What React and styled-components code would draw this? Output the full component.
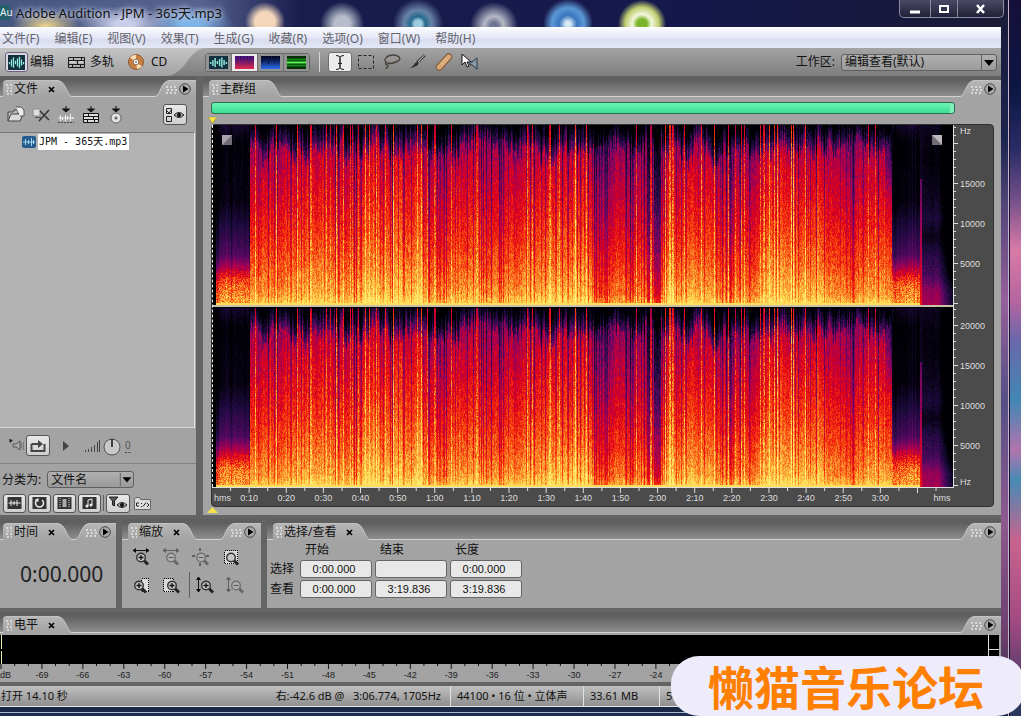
import { useEffect, useRef } from 'react'
import styled, { createGlobalStyle, css } from 'styled-components'

const GlobalStyle = createGlobalStyle`
  * { box-sizing: border-box; }
  body {
    margin: 0;
    font: 12px/16px "Noto Sans", "Noto Sans CJK SC", sans-serif;
    color: #111;
  }
  button, input, select { font: inherit; color: inherit; }
  button { cursor: pointer; }
`

/* ---------- window ---------- */

const Desktop = styled.div`
  position: relative;
  display: flex;
  min-height: 100vh;
  overflow: hidden;
  background: linear-gradient(#15103a 0, #0d1644 90px, #2a2d66 150px, #75508c 200px, #d97aa6 250px, #b765a0 300px,
    #6b67ab 340px, #4187b5 400px, #b274ad 450px, #478ab5 480px, #c8648e 540px, #a44a83 620px, #27355c 716px);
`

const Window = styled.div`
  flex: 1;
  min-width: 0;
  display: flex;
  flex-direction: column;
  margin-right: 11px;
  padding: 0 7px 9px 0;
  border-right: 1px solid #15122c;
  box-shadow: inset -1px 0 #c9b5d0;
  background:
    linear-gradient(0deg, #1c2c4c 3px, #a9b8cc 3px, #a9b8cc 4px, #182846 4px, #182846 9px, transparent 9px),
    linear-gradient(#1a1a38 0, #1b2450 140px, #4e4377 200px, #96609b 300px, #554f86 400px, #8e5a90 520px, #6b3d6c 640px, #26304f 700px);
`

const TitleBar = styled.header`
  display: flex;
  align-items: flex-start;
  height: 27px;
  background:
    radial-gradient(ellipse 34px 16px at 46px 26px, #f1d68a, transparent),
    radial-gradient(ellipse 46px 18px at 124px 24px, #c9cdea 20%, transparent),
    radial-gradient(ellipse 44px 18px at 190px 24px, #7cb4e8 20%, transparent),
    radial-gradient(circle 20px at 265px 22px, #f3d6bb 50%, transparent),
    radial-gradient(circle 22px at 342px 24px, #b9bccb 35%, #6d7792 65%, transparent),
    radial-gradient(circle 25px at 418px 24px, #9fcadf 15%, #246a8c 30%, #6983a7 55%, transparent),
    radial-gradient(circle 24px at 494px 26px, #6d7694 15%, #b6b8c6 40%, transparent),
    radial-gradient(circle 25px at 568px 24px, #d6e7f7 10%, #3a76bd 35%, #5b97d6 65%, transparent),
    radial-gradient(circle 24px at 642px 24px, #7cb52c 20%, #f2f7de 40%, #c0cd71 70%, transparent),
    linear-gradient(90deg, #44557f 0, #56628f 200px, #191d4e 300px, #15184a 700px, #1a1a36 100%);
`

const AppBadge = styled.span`
  width: 10px;
  height: 15px;
  margin-top: 5px;
  background: #24606b;
  color: #e2f2f2;
  font-size: 10px;
  line-height: 14px;
`

const WindowTitle = styled.h1`
  flex: 1;
  margin: 5px 0 0 6px;
  font-size: 13px;
  line-height: 16px;
  font-weight: 400;
  white-space: nowrap;
  text-shadow: 0 0 5px #dfe6f8, 0 0 8px #cdd6ee;
`

const WindowControls = styled.div`
  display: flex;
  height: 18px;
  margin-right: -2px;
  border: 1px solid #8a8ca4;
  border-top: 0;
  border-radius: 0 0 5px 5px;
  background: linear-gradient(#4a4a64, #202038);
`

const WindowButton = styled.button`
  display: grid;
  place-items: center;
  width: ${(p) => p.$width}px;
  padding: 0;
  border: 0;
  border-left: ${(p) => (p.$first ? '0' : '1px solid #8a8ca4')};
  background: none;
`

const MenuBar = styled.nav`
  display: flex;
  gap: 15px;
  height: 21px;
  padding: 1px 2px 0;
  margin-right: 1px;
  border-top: 1px solid #fff;
  background: linear-gradient(#fafbff, #e6e9f6 45%, #d9ddf0 60%, #e4e7f5);
`

const MenuItem = styled.button`
  padding: 0;
  border: 0;
  background: none;
  color: #63636b;
  line-height: 17px;
  white-space: nowrap;
`

/* ---------- toolbar ---------- */

const ToolBar = styled.div`
  display: flex;
  align-items: center;
  height: 28px;
  margin-right: 1px;
  background: linear-gradient(#a4a4a4, #7d7d7d);
`

const ModeGroup = styled.div`
  display: flex;
  align-items: center;
  gap: 14px;
  height: 28px;
  padding-left: 5px;
  background: linear-gradient(#c4c4c4, #a2a2a2);
`

const ModeButton = styled.button`
  display: flex;
  align-items: center;
  gap: ${(p) => p.$gap || 2}px;
  height: 24px;
  padding: 0;
  border: 0;
  background: none;
  white-space: nowrap;
`

const ActiveIcon = styled.span`
  display: grid;
  place-items: center;
  width: 23px;
  height: 20px;
  border: 1px solid #6f5f7c;
  border-radius: 3px;
  background: #d8d8e2;
`

const ViewGroup = styled.div`
  display: flex;
  height: 19px;
  margin: 0 9px 0 0;
  border: 1px solid #666;
  border-radius: 3px;
`

const ViewButton = styled.button`
  display: grid;
  place-items: center;
  width: 26px;
  padding: 0;
  border: 0;
  border-right: 1px solid #707070;
  background: ${(p) => (p.$on ? '#efe9ef' : '#939393')};
  &:last-child { width: 25px; border-right: 0; }
`

const ToolDivider = styled.span`
  width: 1px;
  height: 20px;
  margin-right: 8px;
  background: #d6d6d6;
`

const Tool = styled.button`
  display: grid;
  place-items: center;
  width: 24px;
  height: 20px;
  margin-right: 2px;
  padding: 0;
  border: 1px solid transparent;
  border-radius: 3px;
  background: none;
  ${(p) => p.$on && css`
    background: #ececec;
    border-color: #6e6e6e;
  `}
`

const FieldLabel = styled.label`
  white-space: nowrap;
`

const SelectBox = styled.span`
  position: relative;
  display: block;
  flex: none;
  width: ${(p) => p.$width}px;
  margin: 0 ${(p) => p.$after || 0}px 0 ${(p) => p.$before || 0}px;
  select {
    display: block;
    width: 100%;
    height: 17px;
    padding: 0 20px 0 3px;
    border: 1px solid #5f5f5f;
    border-radius: 3px;
    background: linear-gradient(#b0b0b0, #9a9a9a);
    appearance: none;
    line-height: 14px;
  }
  svg {
    position: absolute;
    right: 0;
    top: 0;
    pointer-events: none;
  }
`

const WorkspaceField = styled.div`
  display: flex;
  align-items: center;
  margin-left: auto;
`

/* ---------- docked panels ---------- */

const Workspace = styled.main`
  flex: 1;
  display: flex;
  flex-direction: column;
  gap: 4px;
  margin-right: 1px;
  background: #646464;
`

const DockRow = styled.div`
  display: flex;
  gap: ${(p) => p.$gap}px;
  flex: ${(p) => (p.$grow ? 1 : 'none')};
`

const PanelBox = styled.section`
  display: flex;
  flex-direction: column;
  flex: ${(p) => (p.$width ? 'none' : 1)};
  width: ${(p) => (p.$width ? p.$width + 'px' : 'auto')};
  min-width: 0;
`

const Strip = styled.div`
  display: flex;
  align-items: flex-end;
  height: 21px;
  padding-left: ${(p) => p.$inset}px;
  border-bottom: 1px solid #d2d2d2;
  background: linear-gradient(#5f5f5f 20%, #8e8e8e);
`

const Tab = styled.div`
  display: flex;
  align-items: center;
  height: 17px;
  margin-bottom: -1px;
  padding: 0 ${(p) => (p.$closable ? 0 : 10)}px 0 2px;
  border-top: 1px solid #c2c2c2;
  border-radius: 4px 0 0 0;
  background: linear-gradient(#b6b6b6, #a3a3a3);
  h2 {
    margin: 0 0 0 2px;
    font-size: 12px;
    line-height: 16px;
    font-weight: 400;
    white-space: nowrap;
  }
`

const CloseTab = styled.button`
  display: grid;
  place-items: center;
  width: 10px;
  height: 12px;
  margin-left: 8px;
  padding: 0;
  border: 0;
  background: none;
`

const SlopeSvg = styled.svg`
  display: block;
  flex: none;
  margin-bottom: -1px;
`

const Fold = styled.div`
  display: flex;
  align-items: center;
  gap: 2px;
  height: 17px;
  margin-bottom: -1px;
  padding-right: 5px;
  border-top: 1px solid #c2c2c2;
  background: linear-gradient(#b6b6b6, #a3a3a3);
  > svg { margin-left: -6px; }
`

const FoldStart = styled.div`
  display: flex;
  margin-left: auto;
`

const RoundButton = styled.button`
  display: grid;
  padding: 0;
  border: 0;
  background: none;
`

const Body = styled.div`
  flex: 1;
  display: flex;
  flex-direction: column;
  background: #a3a3a3;
`

/* ---------- file panel ---------- */

const FileTools = styled.div`
  display: flex;
  align-items: center;
  gap: 5px;
  height: 35px;
  padding: 0 9px 0 6px;
`

const IconButton = styled.button`
  display: grid;
  place-items: center;
  width: 20px;
  height: 20px;
  padding: 0;
  border: 0;
  background: none;
`

const FrameButton = styled.button`
  display: grid;
  place-items: center;
  flex: none;
  width: ${(p) => p.$width || 24}px;
  height: ${(p) => p.$height || 19}px;
  margin-left: ${(p) => (p.$end ? 'auto' : 0)};
  padding: 0;
  border: 1px solid #555;
  border-radius: 3px;
  background: linear-gradient(#e8e8e8, #cfcfcf);
`

const FileList = styled.ul`
  flex: 1;
  margin: 0 1px 0 0;
  padding: 1px 0 0 22px;
  border-top: 1px solid #777;
  border-right: 1px solid #e4e4e4;
  border-bottom: 1px solid #d8d8d8;
  background: #b2b2b2;
  list-style: none;
`

const FileItem = styled.li`
  display: flex;
  align-items: center;
  gap: 2px;
  height: 16px;
  span {
    padding: 0 2px 0 1px;
    background: #fff;
    font: 10px/16px "DejaVu Sans Mono", "Noto Sans CJK SC", monospace;
    white-space: pre;
  }
`

const PlayRow = styled.div`
  display: flex;
  align-items: center;
  height: 36px;
  padding-left: 6px;
  border-bottom: 1px solid #808080;
`

const Gain = styled.span`
  margin-left: 3px;
  border-bottom: 1px dotted #444;
  color: #555;
  font-size: 10px;
  line-height: 13px;
`

const SortRow = styled.div`
  display: flex;
  align-items: center;
  height: 29px;
  padding: 2px 0 0 2px;
`

const FilterRow = styled.div`
  display: flex;
  align-items: center;
  gap: 2px;
  height: 22px;
  padding: 0 0 2px 3px;
`

/* ---------- main panel ---------- */

const Timeline = styled.div`
  display: flex;
  flex-direction: column;
  padding: 5px 7px 8px 8px;
`

const Overview = styled.div`
  height: 12px;
  margin-right: 39px;
  border: 1px solid #2d6e50;
  border-radius: 3px;
  background: linear-gradient(#6cf5b4, #3ddc92);
  box-shadow: inset -4px 0 #7ff0b9;
`

const Marker = styled.svg`
  display: block;
  margin: ${(p) => (p.$down ? '3px 0 0 -3px' : '0 0 -6px -4px')};
`

const Editor = styled.div`
  display: grid;
  grid-template-columns: 1fr 39px;
  border: 1px solid #303030;
  border-radius: 4px;
  background: #4b4b4b;
`

const Channels = styled.div`
  position: relative;
  display: flex;
  flex-direction: column;
  gap: 3px;
  min-width: 0;
  border-bottom: 1px solid #ddd;
  border-right: 1px solid #ddd;
  background: linear-gradient(#000 180px, #c8c2a8 180px, #c8c2a8 182px, #000 182px);
  canvas {
    display: block;
    width: 100%;
    image-rendering: pixelated;
  }
`

const Playhead = styled.span`
  position: absolute;
  top: 0;
  bottom: 0;
  left: 0;
  border-left: 1px dashed #eee;
`

const Corner = styled.svg`
  position: absolute;
  top: 10px;
  ${(p) => (p.$right ? 'right: 11px;' : 'left: 10px;')}
`

const Ruler = styled.svg`
  display: block;
  width: 100%;
  overflow: hidden;
  font: 9px "Liberation Sans", sans-serif;
  fill: ${(p) => p.$fill};
`

/* ---------- lower panels ---------- */

const Clock = styled.output`
  margin: 21px auto 20px 20px;
  font-size: 21px;
  line-height: 27px;
  color: #222;
`

const ZoomRows = styled.div`
  padding: 3px 0 9px 4px;
`

const ZoomRow = styled.div`
  display: flex;
  align-items: center;
  height: 28px;
`

const ZoomButton = styled(IconButton)`
  width: 30px;
  opacity: ${(p) => (p.$off ? 0.45 : 1)};
`

const Separator = styled.span`
  width: 1px;
  height: ${(p) => p.$height}px;
  margin-left: ${(p) => p.$before || 0}px;
  background: #5f5f5f;
`

const RangeTable = styled.table`
  width: 258px;
  table-layout: fixed;
  border-collapse: separate;
  border-spacing: 3px 2px;
  th, td { padding: 0; font-weight: 400; text-align: left; }
  thead th { height: 16px; line-height: 16px; padding-left: 5px; }
  th:first-child { width: 27px; padding: 0; }
  tbody th { line-height: 18px; white-space: nowrap; }
`

const TimeInput = styled.input`
  display: block;
  width: 100%;
  height: 18px;
  padding: 0 4px 0 0;
  border: 1px solid #666;
  border-radius: 3px;
  background: #e8e8e8;
  text-align: center;
  font: 11px "Liberation Sans", sans-serif;
`

const Meter = styled.div`
  display: flex;
  justify-content: space-between;
  height: 29px;
  margin: 2px 2px 0 0;
  border-left: 1px solid #000;
  background: #000;
`

const MeterLevel = styled.span`
  width: 1px;
  background: linear-gradient(#f1efae 14px, #000 14px, #000 16px, #f1efae 16px);
`

const MeterClip = styled.span`
  width: 11px;
  border-left: 1px solid #ddd;
  background: linear-gradient(#000 14px, #ddd 14px, #ddd 15px, #000 15px);
`

const StatusBar = styled.footer`
  display: grid;
  grid-template-columns: 450px 133px 76px 1fr;
  height: 21px;
  margin-right: 1px;
  border-bottom: 1px solid #e8e8e8;
  background: linear-gradient(#c0c0c0, #8f8f8f);
  font-size: 11px;
  line-height: 20px;
`

const StatusCell = styled.div`
  display: flex;
  justify-content: space-between;
  padding: 0 9px 0 ${(p) => (p.$first ? 1 : 6)}px;
  border-left: ${(p) => (p.$first ? '0' : '1px solid #e0e0e0')};
  white-space: pre;
`

const StatusDivide = styled.div`
  height: 4px;
  margin-right: 1px;
  background: #646464;
`

const ForumBanner = styled.div`
  position: absolute;
  right: -4px;
  bottom: 0;
  width: 354px;
  height: 60px;
  padding-left: 37px;
  border-radius: 28px;
  background: #eeebfb;
  color: #ff8000;
  font: 700 46px/58px "Noto Sans CJK SC", sans-serif;
  white-space: nowrap;
`

/* ---------- small drawings ---------- */

const Arrow = ({ w = 17 }) => (
  <svg width={w} height="17" viewBox="0 0 17 17">
    <path d="M1.5 1v15" stroke="#5f5f5f" />
    <path d="M4 6h10l-5 6z" fill="#000" />
  </svg>
)

const WaveIcon = ({ w = 17, h = 13 }) => (
  <svg width={w} height={h} viewBox="0 0 17 13" preserveAspectRatio="none">
    <rect width="17" height="13" fill="#12303f" />
    <path d="M1.500 6v2M3.500 4v6M5.500 2v9M7.500 5v3M9.500 3v7M11.500 1.500v10M13.500 4v5M15.500 6v2" stroke="#8fe8dc" strokeWidth="1.300" />
  </svg>
)

const TrackIcon = () => (
  <svg width="17" height="13" viewBox="0 0 17 13">
    <path d="M.5 1.500h16v10H.5zM.5 4.500h16M.5 8.500h16M5.500 1v3M9.500 4v4M4.500 8v3M12.500 8v3M13.500 1v3" fill="none" stroke="#1b1b1b" />
    <path d="M2 6h5M11 6h4" stroke="#eee" />
  </svg>
)

const DiscIcon = () => (
  <svg width="16" height="16" viewBox="0 0 16 16">
    <circle cx="8" cy="8" r="7.500" fill="#c77f42" stroke="#8a5a34" />
    <path d="M8 8 2 3.500A7.500 7.500 0 0 1 8 .8zM8 8l6 4.500A7.500 7.500 0 0 1 9 15z" fill="#f8ddb4" />
    <circle cx="8" cy="8" r="2.800" fill="#fff" stroke="#8f6b52" />
    <circle cx="8" cy="8" r="1" fill="#777" />
  </svg>
)

const SpectralIcon = ({ from, to, lines }) => (
  <svg width="19" height="13" viewBox="0 0 19 13">
    <defs>
      <linearGradient id={'spec' + from.slice(1)} x2="0" y2="1">
        <stop offset=".1" stopColor={from} />
        <stop offset="1" stopColor={to} />
      </linearGradient>
    </defs>
    <rect width="19" height="13" fill={`url(#spec${from.slice(1)})`} />
    <path d="M1.500 0v7M4.500 0v5M7.500 0v8M10.500 0v4M13.500 0v7M16.500 0v5" stroke={lines} />
  </svg>
)

const PhaseIcon = () => (
  <svg width="19" height="13" viewBox="0 0 19 13">
    <rect width="19" height="13" fill="#062c08" />
    <path d="M0 3.500h19M0 9.500h19" stroke="#0f8a17" strokeWidth="2" />
    <path d="M0 6.500h19" stroke="#5dfb55" strokeWidth="2" />
  </svg>
)

const tools = [
  ['时间选择', <svg width="12" height="15" viewBox="0 0 12 15"><path d="M2 .5q4 0 4 2v10q0 2-4 2M10 .5q-4 0-4 2v10q0 2 4 2M4 8.500h4" fill="none" stroke="#222" /></svg>],
  ['选框', <svg width="16" height="15" viewBox="0 0 16 15"><path d="M.5 .5h15v13H.5z" fill="none" stroke="#1d2733" strokeDasharray="3 2" /></svg>],
  ['套索', <svg width="18" height="16" viewBox="0 0 18 16"><path d="M4 9C-1 6 4 1 10 1s9 4 5 6-8 3-10 2-4 1-1 2-1 3-1 4" fill="none" stroke="#4d443c" strokeWidth="1.400" /></svg>],
  ['画笔', <svg width="18" height="16" viewBox="0 0 18 16"><path d="M16 1 8 8.500" stroke="#333" strokeWidth="2.500" /><path d="M16 .5 9 8" stroke="#ddd" /><path d="M9 8q1 3-2 4-3 2-6 2 4-2 5-5z" fill="#2b2b34" /></svg>],
  ['修复', <svg width="18" height="18" viewBox="0 0 18 18"><rect x="-1" y="6" width="20" height="6" rx="3" fill="#d9a877" stroke="#7d5634" transform="rotate(-48 9 9)" /><path d="m6 9 3 3M8 7l3 3M10 5l3 3" stroke="#f4dcbd" strokeDasharray="1 1" /></svg>],
  ['刷放', <svg width="18" height="16" viewBox="0 0 18 16"><path d="M1 0v11l3-3 2 5 2-1-2-4h4z" fill="#fff" stroke="#111" /><path d="M9 8h2l5-4v11l-5-4H9z" fill="#8c98a2" stroke="#263b4c" /></svg>],
]

const Slope = ({ flip }) => (
  <SlopeSvg width="16" height="17" viewBox="0 0 16 17">
    <defs>
      <linearGradient id="slopeFill" x2="0" y2="1">
        <stop stopColor="#b6b6b6" />
        <stop offset="1" stopColor="#a3a3a3" />
      </linearGradient>
    </defs>
    <g transform={flip ? 'matrix(-1 0 0 1 16 0)' : undefined}>
      <path d="M0 0c6 0 8 4 10 8s3 8 6 9H0z" fill="url(#slopeFill)" />
      <path d="M0 .5c6 0 8 4 10 8s3 8 6 8" fill="none" stroke="#c8c8c8" />
    </g>
  </SlopeSvg>
)

const Grip = ({ w = 7, h = 12 }) => {
  const dots = []
  for (let y = 1; y < h; y += 3) {
    for (let x = 1; x < w; x += 4) {
      dots.push(<rect key={x + '-' + y} x={x + (y % 2 ? 0 : 1)} y={y} width="2" height="2" fill="#d8d8d8" />)
    }
  }
  return <svg width={w} height={h} viewBox={`0 0 ${w} ${h}`}>{dots}</svg>
}

const PanelMenu = () => (
  <RoundButton aria-label="面板菜单">
    <svg width="12" height="12" viewBox="0 0 12 12">
      <circle cx="6" cy="6" r="5.300" fill="#a9a9a9" stroke="#4a4a4a" />
      <path d="m4 2.500 5.500 3.500L4 9.500z" fill="#000" />
    </svg>
  </RoundButton>
)

const Magnifier = ({ sign = '', frame, arrow, shift = 0 }) => (
  <svg width="18" height="18" viewBox="0 0 18 18">
    {frame && <path d={frame} fill="#dcdcdc" stroke="#000" strokeDasharray="1 1" shapeRendering="crispEdges" />}
    {arrow === 'h' && <path d="M1 2.500h16M4 .5 1 2.500l3 2M14 .5l3 2-3 2" fill="#111" stroke="#111" />}
    {arrow === 'v' && <path d="M2.500 1v15M.5 4l2-3 2 3M.5 13l2 3 2-3" fill="#111" stroke="#111" />}
    {arrow === 'all' && <path d="M8 0v3M8 15v3M0 8h3M14 8h3" fill="none" stroke="#111" strokeWidth="2" />}
    <g transform={`translate(${shift} 0)`}>
      <path d="m12 12.500 4 4" stroke="#222" strokeWidth="3" />
      <circle cx="9" cy="9.500" r="4.300" fill="#c6c6c6" stroke="#333" strokeWidth="1.400" />
      {sign !== '' && <path d={sign === '+' ? 'M6.500 9.500h5M9 7v5' : 'M6.500 9.500h5'} stroke="#111" strokeWidth="1.300" />}
    </g>
  </svg>
)

const DownArrow = () => <path d="M9 0v3M5.500 3h7L9 6z" fill="#111" stroke="#111" />

/* ---------- spectrogram ---------- */

// [level, r, g, b]
const palette = [
  [0, 0, 0, 4], [0.16, 28, 10, 62], [0.32, 92, 8, 100], [0.45, 165, 0, 82],
  [0.58, 222, 0, 28], [0.7, 246, 56, 12], [0.82, 250, 140, 42], [0.94, 254, 214, 78], [1.1, 255, 244, 130],
]

function colorAt(v) {
  let i = 1
  while (i < palette.length - 1 && v > palette[i][0]) i++
  const a = palette[i - 1]
  const b = palette[i]
  const t = Math.min(1, Math.max(0, (v - a[0]) / (b[0] - a[0])))
  return [a[1] + (b[1] - a[1]) * t, a[2] + (b[2] - a[2]) * t, a[3] + (b[3] - a[3]) * t]
}

function curve(points, f) {
  for (let i = 1; i < points.length; i++) {
    if (f <= points[i][0]) {
      const [x0, y0] = points[i - 1]
      const [x1, y1] = points[i]
      return y0 + ((y1 - y0) * (f - x0)) / (x1 - x0)
    }
  }
  return points[points.length - 1][1]
}

const loud = [[0, 0.96], [0.06, 0.86], [0.2, 0.77], [0.4, 0.67], [0.6, 0.59], [0.8, 0.51], [0.9, 0.46], [1, 0.4]]
const quiet = [[0, 0.86], [0.1, 0.77], [0.14, 0.68], [0.2, 0.48], [0.28, 0.28], [0.42, 0.17], [0.58, 0.03], [0.9, 0], [1, 0.1]]
const tail = [[0, 0.46], [0.08, 0.42], [0.16, 0.28], [0.3, 0.17], [0.38, 0.06], [0.48, 0.15], [0.6, 0.08], [0.8, 0.02], [1, 0.08]]
// loudness offset over the song
const energy = [[38, 0], [70, -0.04], [95, 0.01], [110, 0.01], [142, -0.05], [150, 0.05], [210, 0.05], [218, -0.05],
  [260, 0], [320, 0], [345, 0.05], [380, 0.05], [383, -0.1], [436, -0.08], [448, -0.12], [451, 0], [485, 0.01],
  [515, -0.06], [545, -0.05], [560, 0.05], [612, 0.05], [616, -0.04], [640, -0.04], [655, 0.01], [680, -0.02]]

function drawSpectrum(canvas, seed) {
  const { width, height } = canvas
  const ctx = canvas.getContext('2d')
  const img = ctx.createImageData(width, height)
  let s = 77
  const rnd = () => {
    s = (s * 1664525 + 1013904223) % 4294967296
    return s / 4294967296
  }
  const columns = []
  let slow = 0
  let cut = 0.5
  for (let x = 0; x < width; x++) {
    slow = slow * 0.75 + (rnd() - 0.5) * 0.075
    cut = cut * 0.8 + rnd() * 0.2
    const r = rnd()
    const weak = x > 382 && x < 450
    let hit = 0
    if (r < (weak ? 0.42 : 0.2)) hit = -0.08 - rnd() * 0.2
    else if (r > 0.89) hit = 0.08 + rnd() * 0.13
    if ((x > 434 && x < 438) || (x > 441 && x < 449)) hit = -0.3
    // how far the dark fringe reaches down from the top
    const edge = 0.98 - Math.max(0, cut - 0.35) * 0.45 - rnd() * 0.07
    columns.push({ shift: slow + hit, edge })
  }
  s = seed
  let grain = 0
  for (let x = 0; x < width; x++) {
    const c = columns[x]
    for (let y = 0; y < height; y++) {
      const f = 1 - y / (height - 1)
      const n = rnd() - 0.5
      grain = grain * 0.35 + n
      let v = 0
      if (x > 37 && x < 680) {
        v = curve(loud, f) + curve(energy, x) + c.shift * (0.55 + f * 0.5) + grain * 0.14
        if (f > c.edge && c.shift < 0.1) v -= 0.12 + (f - c.edge) * 2.2
        if (x > 670) v -= Math.max(0, f - 0.5) * (x - 670) * 0.08
        if (c.shift > 0.1 && n > 0 && f < 0.9) v += 0.06
      } else if (x >= 708 && x <= 709) {
        v = f < 0.7 ? 0.62 - f * 0.42 + n * 0.1 : 0.08
      } else if (x > 709) {
        v = curve(tail, f) + n * 0.09 + c.shift * 0.1 - Math.max(0, x - 726) * 0.025
      } else if (x > 3) {
        v = curve(quiet, f) + c.shift * 0.3 + n * (f < 0.2 ? 0.22 : 0.07)
        if (x < 8) v -= 0.08
      }
      if (y >= height - 2 && x > 3 && x < 708) v = 0.98
      const [r, g, b] = colorAt(v)
      const at = (y * width + x) * 4
      img.data[at] = r
      img.data[at + 1] = g
      img.data[at + 2] = b
      img.data[at + 3] = 255
    }
  }
  ctx.putImageData(img, 0, 0)
}

function Spectrum({ seed, height }) {
  const ref = useRef(null)
  useEffect(() => {
    drawSpectrum(ref.current, seed)
  }, [seed])
  return <canvas ref={ref} width="741" height={height} />
}

function FrequencyScale() {
  const ticks = []
  // 8px per 1000 Hz, both channels end on zero
  for (const zero of [178, 360]) {
    for (let k = 0; k <= 22; k++) {
      const y = zero - k * 8
      ticks.push(<path key={zero + '-' + k} d={`M0 ${y}.5h${k % 5 === 0 ? 4 : 2}`} stroke="#ddd" />)
    }
  }
  const labels = [['Hz', 9], ['15000', 62], ['10000', 102], ['5000', 142], ['20000', 204], ['15000', 244], ['10000', 284], ['5000', 324], ['Hz', 360]]
  return (
    <Ruler height="363" $fill="#dedede">
      {ticks}
      {labels.map(([text, y]) => <text key={y} x="6" y={y}>{text}</text>)}
    </Ruler>
  )
}

function TimeScale() {
  const at = (sec) => `${(sec / 199.836) * 100}%`
  const marks = []
  for (let t = 5; t < 200; t += 5) marks.push(t)
  return (
    <Ruler height="18" $fill="#dedede">
      {marks.map((t) => <line key={t} x1={at(t)} x2={at(t)} y1="0" y2={t % 10 ? 3 : 5} stroke="#ddd" />)}
      <text x="2" y="13">hms</text>
      {marks.filter((t) => t % 10 === 0 && t <= 180).map((t) => (
        <text key={t} x={at(t)} y="13" textAnchor="middle">
          {Math.floor(t / 60)}:{String(t % 60).padStart(2, '0')}
        </text>
      ))}
      <text x="98.4%" y="13" textAnchor="middle">hms</text>
    </Ruler>
  )
}

function LevelScale() {
  const at = (i) => `${0.1 + i * 1.363}%`
  const marks = Array.from({ length: 73 }, (_, i) => i)
  return (
    <Ruler height="18" $fill="#222">
      {marks.map((i) => <line key={i} x1={at(i)} x2={at(i)} y1="0" y2={i % 3 ? 2 : 5} stroke="#111" />)}
      <text x="0" y="14">dB</text>
      {marks.filter((i) => i > 0 && i % 3 === 0).map((i) => (
        <text key={i} x={at(i)} y="14" textAnchor="middle">{i - 72}</text>
      ))}
    </Ruler>
  )
}

/* ---------- app ---------- */

function Panel({ title, width, inset = 3, closable = true, children }) {
  return (
    <PanelBox $width={width}>
      <Strip $inset={inset}>
        <Tab $closable={closable}>
          <Grip />
          <h2>{title}</h2>
          {closable && (
            <CloseTab aria-label={'关闭' + title}>
              <svg width="7" height="7" viewBox="0 0 7 7"><path d="m1 1 5 5M6 1 1 6" stroke="#000" strokeWidth="1.700" /></svg>
            </CloseTab>
          )}
        </Tab>
        <Slope />
        <FoldStart>
          <Slope flip />
          <Fold>
            <Grip w={12} h={9} />
            <PanelMenu />
          </Fold>
        </FoldStart>
      </Strip>
      <Body>{children}</Body>
    </PanelBox>
  )
}

function FilePanel() {
  return (
    <Panel title="文件" width={196}>
      <FileTools>
        <IconButton aria-label="打开">
          <svg width="18" height="17" viewBox="0 0 18 17"><path d="M1 15V6h5l1-2h4v4" fill="#bbb" stroke="#444" /><path d="m1 15 3-7h12l-3 7z" fill="#d8d8d8" stroke="#444" /><path d="M9 1h5l3 3v6h-4" fill="#eee" stroke="#555" /></svg>
        </IconButton>
        <IconButton aria-label="关闭文件">
          <svg width="18" height="17" viewBox="0 0 18 17"><path d="M1 3h7v7H1z" fill="#ddd" stroke="#888" /><path d="M3 11.500h6" stroke="#555" /><path d="m8 5 9 9M17 4 7 15" stroke="#333" strokeWidth="1.500" /></svg>
        </IconButton>
        <IconButton aria-label="插入波形">
          <svg width="18" height="18" viewBox="0 0 18 18"><DownArrow /><path d="M1 12h16M3.500 9v6M5.500 11v3M8.500 9v7M10.500 10v4M13.500 8v7M15.500 11v2" stroke="#eee" /><path d="M1 16.500h16" stroke="#444" strokeDasharray="2 1" /></svg>
        </IconButton>
        <IconButton aria-label="插入多轨">
          <svg width="18" height="18" viewBox="0 0 18 18"><DownArrow /><path d="M1.500 7.500h15v9h-15zM1 10.500h16M1 13.500h16M6.500 7v3M11.500 10v3M5.500 13v3M12.500 13v3" fill="#ddd" stroke="#111" /></svg>
        </IconButton>
        <IconButton aria-label="插入CD">
          <svg width="18" height="18" viewBox="0 0 18 18"><DownArrow /><circle cx="9" cy="12" r="5" fill="#e2e2e2" stroke="#666" /><circle cx="9" cy="12" r="1.500" fill="#666" /></svg>
        </IconButton>
        <FrameButton aria-label="显示选项" $end $height={21}>
          <svg width="20" height="16" viewBox="0 0 20 16"><path d="M1.500 1.500h5v5h-5zM1.500 9.500h5v5h-5zM2 4l2 2 3-4" fill="none" stroke="#222" /><path d="M9 8q5-5 10 0-5 5-10 0z" fill="#aaa" stroke="#222" /><circle cx="14" cy="8" r="2" fill="#111" /></svg>
        </FrameButton>
      </FileTools>
      <FileList>
        <FileItem>
          <svg width="14" height="12" viewBox="0 0 14 12"><rect width="14" height="12" rx="2" fill="#285b8d" /><path d="M1 6h12M3.500 3v6M6.500 4v4M9.500 2v8M11.500 4v4" stroke="#a4dbee" /></svg>
          <span>JPM - 365天.mp3</span>
        </FileItem>
      </FileList>
      <PlayRow>
        <IconButton aria-label="自动播放">
          <svg width="17" height="15" viewBox="0 0 17 15"><path d="m1 1 4 1-3 3z" fill="#222" /><path d="M5 6h3l4-3v9l-4-3H5z" fill="#aaa" stroke="#555" /><path d="M13.500 5v5M15.500 4v8" stroke="#777" /></svg>
        </IconButton>
        <FrameButton aria-label="循环" $height={21}>
          <svg width="16" height="14" viewBox="0 0 16 14"><path d="M1.500 5v7h13V5M1.500 5h7" fill="none" stroke="#444" strokeWidth="2" /><path d="m8 1 5 4-5 4z" fill="#444" /></svg>
        </FrameButton>
        <IconButton aria-label="播放"><svg width="20" height="10" viewBox="0 0 20 10"><path d="m13 0 6 5-6 5z" fill="#444" /></svg></IconButton>
        <svg width="52" height="20" viewBox="0 0 52 20">
          <path d="M15.500 14v2M18.500 13v3M21.500 11v5M24.500 9v7M27.500 6v10M29.500 4v12" stroke="#444" />
          <circle cx="42" cy="11" r="8" fill="#c9c9c9" stroke="#555" />
          <path d="M42 3v8" stroke="#111" strokeWidth="1.500" />
        </svg>
        <Gain>0</Gain>
      </PlayRow>
      <SortRow>
        <FieldLabel htmlFor="sort">分类为:</FieldLabel>
        <SelectBox $width={87} $before={6}>
          <select id="sort"><option>文件名</option></select>
          <Arrow w={15} />
        </SelectBox>
      </SortRow>
      <FilterRow>
        <FrameButton $width={23} aria-label="音频文件"><svg width="15" height="12" viewBox="0 0 14 12"><path fill="#333" d="M0 0h14v12H0z" /><path d="M1 6h12M3.500 3v6M6.500 4v4M9.500 3v6" stroke="#eee" /></svg></FrameButton>
        <FrameButton $width={23} aria-label="循环文件"><svg width="15" height="12" viewBox="0 0 14 12"><path fill="#333" d="M0 0h14v12H0z" /><path d="M4.500 3a4 4 0 1 0 5 0" fill="none" stroke="#eee" strokeWidth="1.500" /><path d="M6 1v4L2 3z" fill="#eee" /></svg></FrameButton>
        <FrameButton $width={23} aria-label="视频文件"><svg width="15" height="12" viewBox="0 0 14 12"><path fill="#333" d="M0 0h14v12H0z" /><path d="M2.500 1v10M11.500 1v10" stroke="#ddd" strokeDasharray="1 1" /><path fill="#aaa" d="M5 2h4v8H5z" /></svg></FrameButton>
        <FrameButton $width={23} aria-label="MIDI文件"><svg width="15" height="12" viewBox="0 0 14 12"><path fill="#333" d="M0 0h14v12H0z" /><path d="M5.500 9V3l4-1v6" fill="none" stroke="#eee" /><circle cx="4.500" cy="9" r="1.500" fill="#eee" /><circle cx="8.500" cy="8" r="1.500" fill="#eee" /></svg></FrameButton>
        <Separator $height={16} />
        <FrameButton aria-label="过滤显示"><svg width="20" height="14" viewBox="0 0 20 14"><path d="M1 1h9L6.500 5v5l-2-1V5z" fill="#555" stroke="#222" /><path d="M9 9q5-5 10 0-5 5-10 0z" fill="#aaa" stroke="#222" /><circle cx="14" cy="9" r="2" fill="#111" /></svg></FrameButton>
        <IconButton aria-label="完整路径"><svg width="17" height="13" viewBox="0 0 17 13"><path d="M.5 12.500V2.500l1-2h4l1 2h10v10z" fill="#ddd" stroke="#666" /><path d="M5 6H2.500v3H5M7.500 6v1M7.500 9v1M9 9.500l3-4M13 6l2 2-2 2" fill="none" stroke="#222" /></svg></IconButton>
      </FilterRow>
    </Panel>
  )
}

function MainPanel() {
  return (
    <Panel title="主群组" inset={6} closable={false}>
      <Timeline>
        <Overview />
        <Marker $down width="9" height="7" viewBox="0 0 9 7"><path d="M0 0h9L4.500 6.500z" fill="#f4e34c" stroke="#8d7b17" strokeWidth=".5" /></Marker>
        <Editor>
          <Channels>
            <Spectrum seed={11} height={180} />
            <Spectrum seed={907} height={179} />
            <Playhead />
            <Corner width="10" height="10" viewBox="0 0 10 10"><path d="M0 0h10v10H0z" fill="#a9a2ab" /><path d="M0 10 10 0v10z" fill="#716b74" /></Corner>
            <Corner $right width="10" height="10" viewBox="0 0 10 10"><path d="M0 0h10v10H0z" fill="#716b74" /><path d="M0 0h10v10z" fill="#bdb8be" /></Corner>
          </Channels>
          <FrequencyScale />
          <TimeScale />
        </Editor>
        <Marker width="11" height="6" viewBox="0 0 11 6"><path d="M0 6h11L5.500 0z" fill="#f4e34c" /></Marker>
      </Timeline>
    </Panel>
  )
}

const ranges = [
  ['选择', '0:00.000', '', '0:00.000'],
  ['查看', '0:00.000', '3:19.836', '3:19.836'],
]

function App() {
  const menus = ['文件(F)', '编辑(E)', '视图(V)', '效果(T)', '生成(G)', '收藏(R)', '选项(O)', '窗口(W)', '帮助(H)']
  return (
    <Desktop>
      <GlobalStyle />
      <Window>
        <TitleBar>
          <AppBadge>Au</AppBadge>
          <WindowTitle>Adobe Audition - JPM - 365天.mp3</WindowTitle>
          <WindowControls>
            <WindowButton $first $width={30} aria-label="最小化"><svg width="12" height="10"><path d="M1 8h10" stroke="#fff" strokeWidth="3" /></svg></WindowButton>
            <WindowButton $width={27} aria-label="最大化"><svg width="12" height="10"><path d="M2 2h8v6H2z" fill="none" stroke="#fff" strokeWidth="2" /></svg></WindowButton>
            <WindowButton $width={46} aria-label="关闭"><svg width="12" height="10"><path d="m2 1 7 8M9 1 2 9" stroke="#fff" strokeWidth="2.500" /></svg></WindowButton>
          </WindowControls>
        </TitleBar>
        <MenuBar>
          {menus.map((m) => <MenuItem key={m}>{m}</MenuItem>)}
        </MenuBar>
        <ToolBar>
          <ModeGroup>
            <ModeButton><ActiveIcon><WaveIcon h={15} /></ActiveIcon>编辑</ModeButton>
            <ModeButton $gap={5}><TrackIcon />多轨</ModeButton>
            <ModeButton $gap={7}><DiscIcon />CD</ModeButton>
          </ModeGroup>
          <svg width="38" height="28" viewBox="0 0 38 28">
            <defs>
              <linearGradient id="modeEnd" x2="0" y2="1"><stop stopColor="#c4c4c4" /><stop offset="1" stopColor="#a2a2a2" /></linearGradient>
            </defs>
            <path d="M0 0h38C20 2 20 26 0 28z" fill="url(#modeEnd)" />
          </svg>
          <ViewGroup>
            <ViewButton aria-label="波形"><WaveIcon w={19} /></ViewButton>
            <ViewButton $on aria-label="频谱"><SpectralIcon from="#3a0f6c" to="#e02a50" lines="#5c1788" /></ViewButton>
            <ViewButton aria-label="声像"><SpectralIcon from="#02041c" to="#2a6cf0" lines="#0a1450" /></ViewButton>
            <ViewButton aria-label="相位"><PhaseIcon /></ViewButton>
          </ViewGroup>
          <ToolDivider />
          {tools.map(([name, icon], i) => <Tool key={name} $on={i === 0} aria-label={name}>{icon}</Tool>)}
          <WorkspaceField>
            <FieldLabel htmlFor="space">工作区:</FieldLabel>
            <SelectBox $width={156} $before={6} $after={4}>
              <select id="space"><option>编辑查看(默认)</option></select>
              <Arrow />
            </SelectBox>
          </WorkspaceField>
        </ToolBar>
        <Workspace>
          <DockRow $grow $gap={7}>
            <FilePanel />
            <MainPanel />
          </DockRow>
          <DockRow $gap={6}>
            <Panel title="时间" width={116}>
              <Clock>0:00.000</Clock>
            </Panel>
            <Panel title="缩放" width={139} inset={6}>
              <ZoomRows>
                <ZoomRow>
                  <ZoomButton aria-label="水平放大"><Magnifier sign="+" arrow="h" /></ZoomButton>
                  <ZoomButton $off aria-label="水平缩小"><Magnifier sign="-" arrow="h" /></ZoomButton>
                  <ZoomButton $off aria-label="全部缩小"><Magnifier sign="-" arrow="all" /></ZoomButton>
                  <ZoomButton aria-label="缩放到选区"><Magnifier frame="M2.500 2.500h13v13h-13z" /></ZoomButton>
                </ZoomRow>
                <ZoomRow>
                  <ZoomButton aria-label="放大到左侧"><Magnifier sign="+" frame="M9.500 2.500h7v13h-7z" shift={-2} /></ZoomButton>
                  <ZoomButton aria-label="放大到右侧"><Magnifier sign="+" frame="M1.500 2.500h10v13h-10z" shift={1} /></ZoomButton>
                  <Separator $before={3} $height={26} />
                  <ZoomButton aria-label="垂直放大"><Magnifier sign="+" arrow="v" shift={1} /></ZoomButton>
                  <ZoomButton $off aria-label="垂直缩小"><Magnifier sign="-" arrow="v" shift={1} /></ZoomButton>
                </ZoomRow>
              </ZoomRows>
            </Panel>
            <Panel title="选择/查看" inset={6}>
              <RangeTable>
                <thead>
                  <tr><th /><th>开始</th><th>结束</th><th>长度</th></tr>
                </thead>
                <tbody>
                  {ranges.map(([name, ...values]) => (
                    <tr key={name}>
                      <th>{name}</th>
                      {values.map((v, i) => (
                        <td key={i}><TimeInput defaultValue={v} aria-label={name + ['开始', '结束', '长度'][i]} /></td>
                      ))}
                    </tr>
                  ))}
                </tbody>
              </RangeTable>
            </Panel>
          </DockRow>
          <DockRow>
            <Panel title="电平">
              <Meter><MeterLevel /><MeterClip /></Meter>
              <LevelScale />
            </Panel>
          </DockRow>
        </Workspace>
        <StatusDivide />
        <StatusBar>
          <StatusCell $first><span>打开 14.10 秒</span><span>右:-42.6 dB @   3:06.774, 1705Hz</span></StatusCell>
          <StatusCell>44100 • 16 位 • 立体声</StatusCell>
          <StatusCell>33.61 MB</StatusCell>
          <StatusCell>5</StatusCell>
        </StatusBar>
      </Window>
      <ForumBanner>懒猫音乐论坛</ForumBanner>
    </Desktop>
  )
}

export default App
